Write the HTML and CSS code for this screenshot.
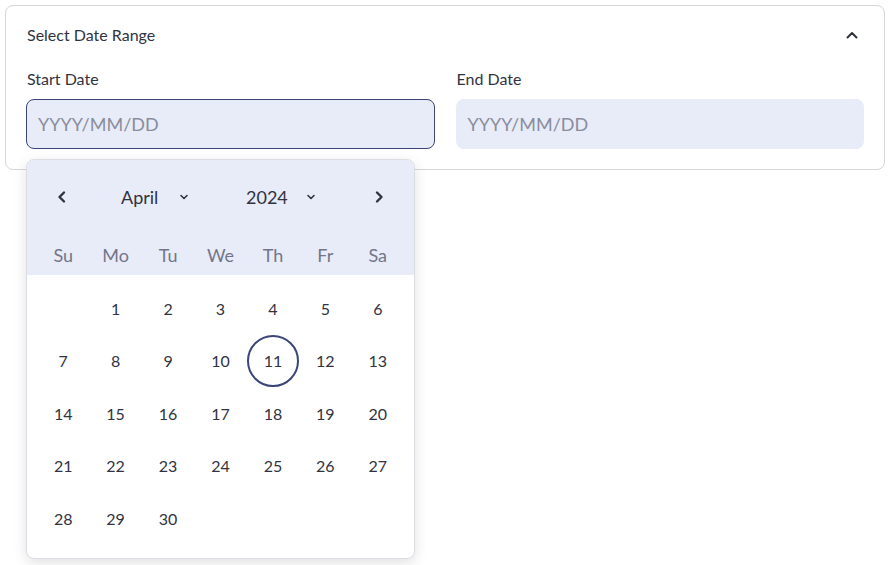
FILE: index.html
```html
<!DOCTYPE html>
<html>
<head>
<meta charset="utf-8">
<link rel="stylesheet" href="styles.css">
</head>
<body>
<div class="page">
  <div class="expander">
    <div class="summary">
      <span class="title">Select Date Range</span>
      <svg class="chev-up" width="14" height="14" viewBox="0 0 14 14"><path d="M2.5 9.5 L7 5 L11.5 9.5" fill="none" stroke="#31333f" stroke-width="2" stroke-linecap="round" stroke-linejoin="round"/></svg>
    </div>
    <div class="content">
      <div class="field">
        <div class="label">Start Date</div>
        <div class="input focused">YYYY/MM/DD</div>
        <div class="calendar">
          <div class="cal-head">
            <div class="nav">
              <svg class="arrow" width="12" height="14" viewBox="0 0 12 14"><path d="M8 2.5 L3.5 7 L8 11.5" fill="none" stroke="#31333f" stroke-width="2.4" stroke-linecap="round" stroke-linejoin="round"/></svg>
              <div class="select month">April <svg width="10" height="8" viewBox="0 0 10 8"><path d="M2 2.5 L5 5.5 L8 2.5" fill="none" stroke="#31333f" stroke-width="1.6" stroke-linecap="round" stroke-linejoin="round"/></svg></div>
              <div class="select year">2024 <svg width="10" height="8" viewBox="0 0 10 8"><path d="M2 2.5 L5 5.5 L8 2.5" fill="none" stroke="#31333f" stroke-width="1.6" stroke-linecap="round" stroke-linejoin="round"/></svg></div>
              <svg class="arrow" width="12" height="14" viewBox="0 0 12 14"><path d="M4 2.5 L8.5 7 L4 11.5" fill="none" stroke="#31333f" stroke-width="2.4" stroke-linecap="round" stroke-linejoin="round"/></svg>
            </div>
            <div class="weekdays">
              <span>Su</span><span>Mo</span><span>Tu</span><span>We</span><span>Th</span><span>Fr</span><span>Sa</span>
            </div>
          </div>
          <div class="days">
            <span></span><span>1</span><span>2</span><span>3</span><span>4</span><span>5</span><span>6</span>
            <span>7</span><span>8</span><span>9</span><span>10</span><span class="today">11</span><span>12</span><span>13</span>
            <span>14</span><span>15</span><span>16</span><span>17</span><span>18</span><span>19</span><span>20</span>
            <span>21</span><span>22</span><span>23</span><span>24</span><span>25</span><span>26</span><span>27</span>
            <span>28</span><span>29</span><span>30</span><span></span><span></span><span></span><span></span>
          </div>
        </div>
      </div>
      <div class="field">
        <div class="label">End Date</div>
        <div class="input">YYYY/MM/DD</div>
      </div>
    </div>
  </div>
</div>
</body>
</html>
```

FILE: styles.css
```css
* { box-sizing: border-box; }
html, body { margin: 0; padding: 0; background: #ffffff; }
body {
  font-family: Lato, "Source Sans Pro", "Noto Sans", sans-serif;
  color: #31333f;
  min-height: 565px;
}
.page { padding: 5px 4px 0 5px; min-height: 565px; }
.expander {
  border: 1px solid #d6d6d9;
  border-radius: 8px;
  background: #fff;
}
.summary {
  display: flex;
  align-items: center;
  justify-content: space-between;
  height: 58px;
  padding: 0 25px 2px 21px;
}
.title { font-size: 16px; }
.chev-up { display: block; margin-top: 2px; }
.content {
  display: grid;
  grid-template-columns: 1fr 1fr;
  column-gap: 21px;
  padding: 0 20px 20px 20px;
}
.field { position: relative; }
.label {
  height: 35px;
  font-size: 16px;
  display: flex;
  align-items: center;
  padding: 0 0 7px 1px;
}
.input {
  height: 50px;
  border-radius: 8px;
  background: #e8ebf8;
  border: 1px solid #e8ebf8;
  display: flex;
  align-items: center;
  padding-left: 11px;
  font-size: 18px;
  color: #8a8d9c;
}
.input.focused { border-color: #3b4578; }
.calendar {
  position: absolute;
  left: 0;
  top: 95px;
  width: 389px;
  background: #fff;
  border: 1px solid #dcdde3;
  border-radius: 8px;
  box-shadow: 0 4px 14px rgba(0,0,0,0.12);
  overflow: hidden;
  z-index: 10;
}
.cal-head {
  background: #e8ebf8;
  padding: 11px 10px 0 10px;
}
.nav {
  height: 52px;
  display: flex;
  align-items: center;
  padding: 0 19px 0 19px;
}
.arrow { display: block; }
.select {
  display: flex;
  align-items: center;
  font-size: 18px;
}
.select svg { display: block; }
.month { margin-left: 53px; width: 68px; justify-content: space-between; }
.year { margin-left: 57px; width: 70px; justify-content: space-between; margin-right: auto; }
.weekdays {
  display: grid;
  grid-template-columns: repeat(7, 1fr);
  height: 52px;
  padding-top: 12px;
  align-items: center;
}
.weekdays span {
  text-align: center;
  font-size: 18px;
  color: #73768a;
}
.days {
  display: grid;
  grid-template-columns: repeat(7, 1fr);
  grid-auto-rows: 52.5px;
  padding: 7px 10px 13px 10px;
}
.days span {
  display: flex;
  align-items: center;
  justify-content: center;
  font-size: 16px;
  color: #31333f;
}
.days .today {
  width: 52px;
  height: 52px;
  justify-self: center;
  align-self: center;
  border: 2px solid #3b4578;
  border-radius: 50%;
}
```
